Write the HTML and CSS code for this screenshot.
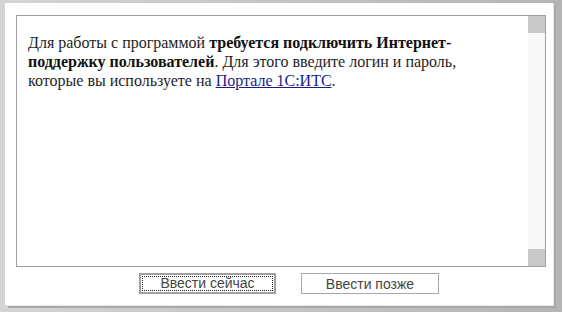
FILE: index.html
```html
<!DOCTYPE html>
<html lang="ru">
<head>
    <meta charset="UTF-8">
    <title>Интернет-поддержка пользователей</title>
    <link rel="stylesheet" href="styles.css">
</head>
<body>
    <div class="window">
        <div class="panel">
            <div class="message">
                <p>Для работы с программой <b>требуется подключить Интернет-поддержку пользователей</b>. Для этого введите логин и пароль, которые вы используете на <a href="#" class="portal-link">Портале 1С:ИТС</a>.</p>
            </div>
            <div class="scrollbar">
                <div class="scroll-btn"></div>
                <div class="scroll-track"></div>
                <div class="scroll-btn"></div>
            </div>
        </div>
        <div class="actions">
            <button class="btn btn-default"><span class="btn-focus">Ввести сейчас</span></button>
            <button class="btn">Ввести позже</button>
        </div>
    </div>
</body>
</html>
```

FILE: styles.css
```css
* {
    margin: 0;
    padding: 0;
    box-sizing: border-box;
}

html, body {
    height: 100%;
}

body {
    background: linear-gradient(to right, #d4d4d4, #b4b4b4);
    padding: 3px 9px 7px 5px;
    font-family: "Liberation Serif", "Times New Roman", serif;
}

.window {
    height: 100%;
    background-color: #fff;
    padding: 12px 7px 0 11px;
    display: flex;
    flex-direction: column;
    box-shadow: 1px 1px 0 #e8e8e8, 3px 3px 0 #a8a8a8;
}

.panel {
    height: 252px;
    border: 1px solid #a0a0a0;
    display: flex;
}

.message {
    flex: 1;
    padding: 17px 64px 0 11px;
    font-size: 16px;
    line-height: 19px;
    color: #1e1e1e;
}

.message b {
    color: #111;
}

.portal-link {
    color: #1c1c8a;
    text-decoration: underline;
}

.scrollbar {
    width: 17px;
    display: flex;
    flex-direction: column;
}

.scroll-btn {
    height: 17px;
    background-color: #c9c9c9;
}

.scroll-track {
    flex: 1;
    background-color: #f8f8f8;
}

.actions {
    display: flex;
    justify-content: center;
    gap: 25px;
    padding: 6px 0 0 16px;
}

.btn {
    width: 138px;
    height: 21px;
    background-color: #fff;
    border: 1px solid #a8a8a8;
    font-family: "Liberation Sans", Arial, sans-serif;
    font-size: 14px;
    color: #444;
    cursor: pointer;
}

.btn-default {
    width: 137px;
    border: 2px solid #a0a0a0;
    padding: 1px;
}

.btn-focus {
    display: block;
    height: 100%;
    border: 1px dotted #222;
    line-height: 13px;
}
```
